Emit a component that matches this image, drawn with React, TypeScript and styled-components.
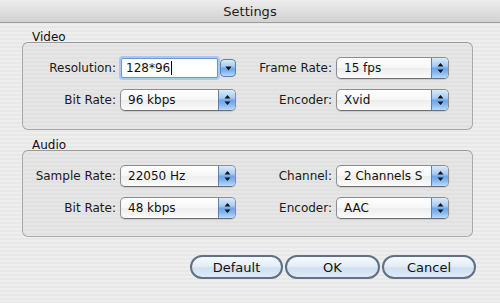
import React from "react";
import styled, { createGlobalStyle } from "styled-components";

const Global = createGlobalStyle`
  html, body { margin: 0; padding: 0; }
  body {
    width: 500px;
    height: 303px;
    overflow: hidden;
    font-family: "DejaVu Sans", "Liberation Sans", sans-serif;
    color: #151515;
  }
`;

const Window = styled.div`
  width: 500px;
  height: 303px;
  display: flex;
  flex-direction: column;
  background: repeating-linear-gradient(
    to bottom,
    #eeeeee 0px,
    #eeeeee 2px,
    #e8e8e8 2px,
    #e8e8e8 4px
  );
`;

const TitleBar = styled.div`
  height: 22px;
  border-bottom: 1px solid #9c9c9c;
  background: linear-gradient(to bottom, #ededed 0%, #dcdcdc 60%, #d2d2d2 100%);
  display: flex;
  align-items: center;
  justify-content: center;
  font-size: 13px;
  color: #1c1c1c;
`;

const Body = styled.div`
  padding: 8px 24px 0 22px;
  display: flex;
  flex-direction: column;
`;

const Section = styled.section<{ $top: number }>`
  margin-right: 3px;
  margin-top: ${(p) => p.$top}px;
`;

const GroupLabel = styled.div`
  font-size: 12px;
  line-height: 12px;
  height: 12px;
  padding-left: 10px;
  color: #111;
`;

const GroupBox = styled.div<{ $pb: number }>`
  margin-top: -1px;
  border: 1px solid #a9a9a9;
  border-top-color: #9a9a9a;
  border-radius: 6px;
  background: repeating-linear-gradient(
    to bottom,
    #e6e6e6 0px,
    #e6e6e6 2px,
    #e1e1e1 2px,
    #e1e1e1 4px
  );
  padding: 14px 23px ${(p) => p.$pb}px 0;
  display: grid;
  grid-template-columns: 93px 116px 92px 113px;
  column-gap: 4px;
  row-gap: 10px;
  align-items: center;
`;

const FieldLabel = styled.label`
  font-size: 12px;
  text-align: right;
  white-space: nowrap;
  color: #1a1a1a;
`;

const Popup = styled.div`
  height: 22px;
  box-sizing: border-box;
  border: 1px solid #8d8d8d;
  border-bottom-color: #6f6f6f;
  border-radius: 5px;
  display: flex;
  overflow: hidden;
  background: linear-gradient(to bottom, #ffffff 0%, #f6f6f6 50%, #ededed 52%, #fbfbfb 100%);
  box-shadow: 0 1px 1px rgba(0, 0, 0, 0.12);
`;

const PopupValue = styled.span`
  flex: 1;
  min-width: 0;
  padding-left: 7px;
  font-size: 12px;
  line-height: 20px;
  white-space: nowrap;
  overflow: hidden;
  color: #111;
`;

const Cap = styled.span`
  width: 16px;
  flex: none;
  border-left: 1px solid #5d80ad;
  display: flex;
  align-items: center;
  justify-content: center;
  background: linear-gradient(
    to bottom,
    #d9eafc 0%,
    #a6cbf4 40%,
    #6ea6ea 52%,
    #7fb3ef 70%,
    #b9dafc 100%
  );
`;

const Combo = styled.div`
  height: 22px;
  display: flex;
  align-items: center;
`;

const TextField = styled.div`
  flex: 1;
  height: 20px;
  box-sizing: border-box;
  margin-left: 1px;
  border: 1px solid #6f96c8;
  box-shadow: 0 0 0 2px #a8c8ee;
  border-radius: 2px;
  background: #fff;
  display: flex;
  align-items: center;
  padding-left: 4px;
  font-size: 12px;
  color: #111;
`;

const Caret = styled.span`
  width: 1px;
  height: 14px;
  margin-left: 1px;
  background: #000;
`;

const ComboButton = styled.span`
  width: 16px;
  height: 18px;
  flex: none;
  margin-left: 2px;
  box-sizing: border-box;
  border: 1px solid #5d80ad;
  border-radius: 4px;
  display: flex;
  align-items: center;
  justify-content: center;
  background: linear-gradient(
    to bottom,
    #d9eafc 0%,
    #a6cbf4 40%,
    #6ea6ea 52%,
    #7fb3ef 70%,
    #b9dafc 100%
  );
`;

const ButtonRow = styled.div`
  display: flex;
  justify-content: flex-end;
  gap: 2px;
  margin-top: 18px;
`;

const AquaButton = styled.button<{ $w: number }>`
  width: ${(p) => p.$w}px;
  height: 24px;
  box-sizing: border-box;
  border: 2px solid #5e7186;
  border-radius: 12px;
  padding: 0;
  font-family: "DejaVu Sans", "Liberation Sans", sans-serif;
  font-size: 13px;
  color: #111;
  background: linear-gradient(
    to bottom,
    #f6f9fc 0%,
    #e4eef8 45%,
    #cfe0f1 55%,
    #dfeaf6 100%
  );
`;

const UpDown = () => (
  <svg width="7" height="12" viewBox="0 0 7 12">
    <path d="M0.5 4.5 L3.5 1 L6.5 4.5 Z" fill="#111" />
    <path d="M0.5 7.5 L3.5 11 L6.5 7.5 Z" fill="#111" />
  </svg>
);

const Down = () => (
  <svg width="7" height="5" viewBox="0 0 7 5">
    <path d="M0.5 0.5 L3.5 4.5 L6.5 0.5 Z" fill="#111" />
  </svg>
);

const Select = ({ value }: { value: string }) => (
  <Popup>
    <PopupValue>{value}</PopupValue>
    <Cap>
      <UpDown />
    </Cap>
  </Popup>
);

export default function App() {
  return (
    <>
      <Global />
      <Window>
        <TitleBar>Settings</TitleBar>
        <Body>
          <Section $top={0}>
            <GroupLabel>Video</GroupLabel>
            <GroupBox $pb={18}>
              <FieldLabel>Resolution:</FieldLabel>
              <Combo>
                <TextField>
                  128*96
                  <Caret />
                </TextField>
                <ComboButton>
                  <Down />
                </ComboButton>
              </Combo>
              <FieldLabel>Frame Rate:</FieldLabel>
              <Select value="15 fps" />
              <FieldLabel>Bit Rate:</FieldLabel>
              <Select value="96 kbps" />
              <FieldLabel>Encoder:</FieldLabel>
              <Select value="Xvid" />
            </GroupBox>
          </Section>
          <Section $top={9}>
            <GroupLabel>Audio</GroupLabel>
            <GroupBox $pb={17}>
              <FieldLabel>Sample Rate:</FieldLabel>
              <Select value="22050 Hz" />
              <FieldLabel>Channel:</FieldLabel>
              <Select value="2 Channels S" />
              <FieldLabel>Bit Rate:</FieldLabel>
              <Select value="48 kbps" />
              <FieldLabel>Encoder:</FieldLabel>
              <Select value="AAC" />
            </GroupBox>
          </Section>
          <ButtonRow>
            <AquaButton $w={93}>Default</AquaButton>
            <AquaButton $w={95}>OK</AquaButton>
            <AquaButton $w={94}>Cancel</AquaButton>
          </ButtonRow>
        </Body>
      </Window>
    </>
  );
}
